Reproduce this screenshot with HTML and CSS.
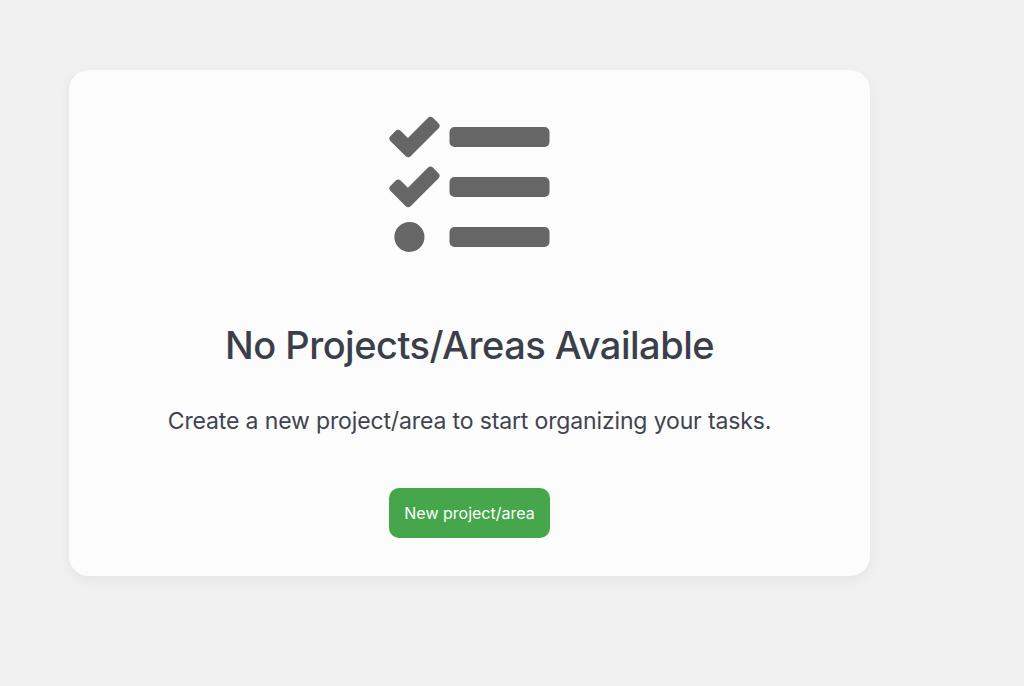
FILE: index.html
```html
<!DOCTYPE html>
<html lang="en">
<head>
<meta charset="utf-8">
<title>Projects</title>
<link rel="stylesheet" href="styles.css">
</head>
<body>
<main class="card">
  <svg class="icon" viewBox="-1.6 0 515.2 512" aria-hidden="true"><path d="M139.61 35.5a12 12 0 0 0-17 0L58.93 98.81l-22.7-22.12a12 12 0 0 0-17 0L3.53 92.41a12 12 0 0 0 0 17l47.59 47.4a12.78 12.78 0 0 0 17.61 0l15.59-15.62L156.52 69a12.09 12.09 0 0 0 .09-17zm0 159.19a12 12 0 0 0-17 0l-63.68 63.72-22.7-22.1a12 12 0 0 0-17 0L3.53 252a12 12 0 0 0 0 17L51 316.5a12.77 12.77 0 0 0 17.6 0l15.7-15.69 72.2-72.22a12 12 0 0 0 .09-16.9zM64 368c-26.49 0-48.59 21.5-48.59 48S37.53 464 64 464a48 48 0 0 0 0-96zm432 16H208a16 16 0 0 0-16 16v32a16 16 0 0 0 16 16h288a16 16 0 0 0 16-16v-32a16 16 0 0 0-16-16zm0-320H208a16 16 0 0 0-16 16v32a16 16 0 0 0 16 16h288a16 16 0 0 0 16-16V80a16 16 0 0 0-16-16zm0 160H208a16 16 0 0 0-16 16v32a16 16 0 0 0 16 16h288a16 16 0 0 0 16-16v-32a16 16 0 0 0-16-16z"/></svg>
  <h1 class="title">No Projects/Areas Available</h1>
  <p class="text">Create a new project/area to start organizing your tasks.</p>
  <button class="btn" type="button">New project/area</button>
</main>
</body>
</html>
```
FILE: styles.css
```css
html, body { margin: 0; height: 100%; }
body {
  background: #f0f0f0;
  font-family: Inter, "Liberation Sans", sans-serif;
  padding: 70px 154px 0 69px;
  box-sizing: border-box;
  overflow: hidden;
}
.card {
  height: 506px;
  box-sizing: border-box;
  padding-top: 37px;
  background: #fcfcfc;
  border-radius: 20px;
  box-shadow: 0 4px 12px rgba(0,0,0,0.05);
  display: flex;
  flex-direction: column;
  align-items: center;
}
.icon { width: 161px; height: 160px; fill: #666; flex: none; }
.title {
  margin: 56px 0 0;
  font-size: 38px;
  line-height: 44px;
  font-weight: 500;
  letter-spacing: -0.5px;
  color: #3a3f4a;
}
.text {
  margin: 40px 0 0;
  font-size: 23px;
  line-height: 28px;
  letter-spacing: -0.14px;
  color: #3f444f;
}
.btn {
  margin-top: 53px;
  width: 161px;
  height: 50px;
  border: 0;
  border-radius: 10px;
  background: #46a64c;
  color: #fff;
  font: 400 16px Inter, "Liberation Sans", sans-serif;
}
```
